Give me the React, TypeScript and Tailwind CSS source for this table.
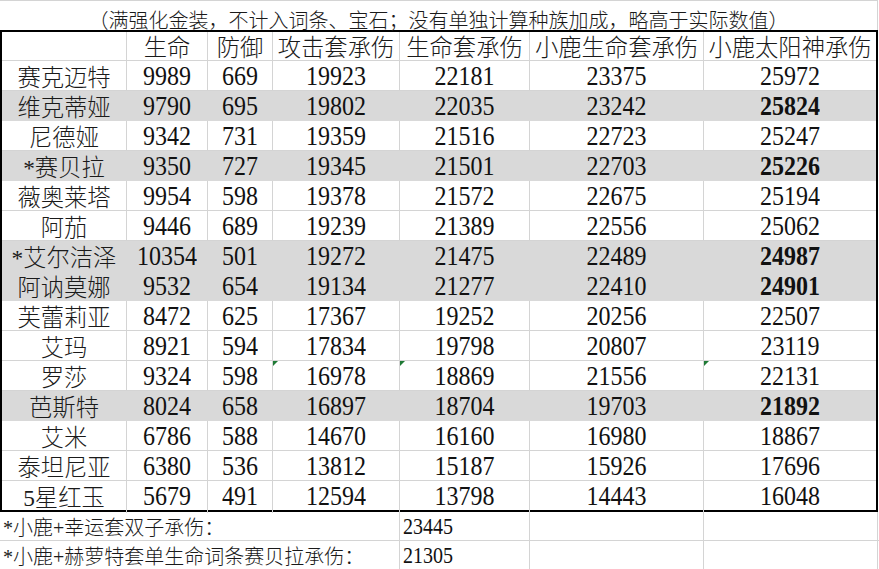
import React from "react";

type Row = { name: string; v: string[]; shade: boolean; tri?: boolean };

const rows: Row[] = [
  { name: "赛克迈特", v: ["9989", "669", "19923", "22181", "23375", "25972"], shade: false },
  { name: "维克蒂娅", v: ["9790", "695", "19802", "22035", "23242", "25824"], shade: true },
  { name: "尼德娅", v: ["9342", "731", "19359", "21516", "22723", "25247"], shade: false },
  { name: "*赛贝拉", v: ["9350", "727", "19345", "21501", "22703", "25226"], shade: true },
  { name: "薇奥莱塔", v: ["9954", "598", "19378", "21572", "22675", "25194"], shade: false },
  { name: "阿茄", v: ["9446", "689", "19239", "21389", "22556", "25062"], shade: false },
  { name: "*艾尔洁泽", v: ["10354", "501", "19272", "21475", "22489", "24987"], shade: true },
  { name: "阿讷莫娜", v: ["9532", "654", "19134", "21277", "22410", "24901"], shade: true },
  { name: "芙蕾莉亚", v: ["8472", "625", "17367", "19252", "20256", "22507"], shade: false },
  { name: "艾玛", v: ["8921", "594", "17834", "19798", "20807", "23119"], shade: false },
  { name: "罗莎", v: ["9324", "598", "16978", "18869", "21556", "22131"], shade: false, tri: true },
  { name: "芭斯特", v: ["8024", "658", "16897", "18704", "19703", "21892"], shade: true },
  { name: "艾米", v: ["6786", "588", "14670", "16160", "16980", "18867"], shade: false },
  { name: "泰坦尼亚", v: ["6380", "536", "13812", "15187", "15926", "17696"], shade: false },
  { name: "5星红玉", v: ["5679", "491", "12594", "13798", "14443", "16048"], shade: false },
];

const headers = ["", "生命", "防御", "攻击套承伤", "生命套承伤", "小鹿生命套承伤", "小鹿太阳神承伤"];

function Tri() {
  return (
    <span className="absolute left-0 top-0 h-0 w-0 border-t-[5px] border-r-[5px] border-t-[#1f7a35] border-r-transparent" />
  );
}

export default function App() {
  return (
    <div className="h-[569px] w-[879px] overflow-hidden bg-white text-[#111] font-['Liberation_Serif','Tinos','Times_New_Roman','Noto_Sans_CJK_SC',serif]">
      {/* title */}
      <div className="flex h-[30px] w-[878px] items-start justify-center border-t border-r border-[#d4d4d4] pt-[6px] font-['Liberation_Serif','Noto_Sans_CJK_SC',serif] text-[20px] font-light leading-[28px] text-[#1a1a1a]">
        （满强化金装，不计入词条、宝石；没有单独计算种族加成，略高于实际数值）
      </div>

      {/* table */}
      <div className="w-[878px] border-2 border-black">
        <div className="grid h-[29px] grid-cols-[125px_81px_65px_127px_130px_174px_172px] border-b border-[#d4d4d4]">
          {headers.map((h, i) => (
            <div
              key={i}
              className={`pt-[2px] text-center font-['Liberation_Serif','Noto_Sans_CJK_SC',serif] text-[23.3px] font-light leading-[29px] text-[#1a1a1a] ${i < 6 ? "border-r border-[#d4d4d4]" : ""}`}
            >
              {h}
            </div>
          ))}
        </div>
        {rows.map((r, ri) => {
          const last = ri === rows.length - 1;
          const line = r.shade ? "border-[#d9d9d9]" : "border-[#d4d4d4]";
          return (
            <div
              key={ri}
              className={`grid grid-cols-[125px_81px_65px_127px_130px_174px_172px] ${last ? "h-[29px]" : "h-[30px] border-b"} ${line} ${r.shade ? "bg-[#d9d9d9]" : ""}`}
            >
              <div className={`border-r ${line} pt-[3px] text-center font-['Liberation_Serif','Noto_Sans_CJK_SC',serif] text-[23.3px] font-light leading-[29px] text-[#1a1a1a]`}>
                {r.name}
              </div>
              {r.v.map((v, ci) => (
                <div
                  key={ci}
                  className={`relative pt-[3px] text-center font-['Liberation_Serif','Tinos','Times_New_Roman',serif] text-[24px] leading-[29px] ${ci < 5 ? `border-r ${line}` : ""} ${ci === 5 && r.shade ? "font-bold" : "font-normal"}`}
                >
                  {r.tri && (ci === 2 || ci === 3 || ci === 5) && <Tri />}
                  <span className="inline-block origin-bottom scale-y-[1.15]">{v}</span>
                </div>
              ))}
            </div>
          );
        })}
      </div>

      {/* footer */}
      {[
        ["*小鹿+幸运套双子承伤：", "23445"],
        ["*小鹿+赫萝特套单生命词条赛贝拉承伤：", "21305"],
      ].map(([label, val], i) => (
        <div
          key={i}
          className="grid h-[29px] grid-cols-[400px_130px_174px_174px] border-b border-[#d4d4d4]"
        >
          <div className="border-r border-[#d4d4d4] pl-[3px] pt-[2px] font-['Liberation_Serif','Noto_Sans_CJK_SC',serif] text-[20px] font-light leading-[29px] text-[#1a1a1a]">
            {label}
          </div>
          <div className="border-r border-[#d4d4d4] pl-[3px] pt-[2px] font-['Liberation_Serif','Tinos','Times_New_Roman',serif] text-[20px] leading-[29px]">
            <span className="inline-block origin-bottom scale-y-[1.15]">{val}</span>
          </div>
          <div className="border-r border-[#d4d4d4]" />
          <div className="border-r border-[#d4d4d4]" />
        </div>
      ))}
    </div>
  );
}
